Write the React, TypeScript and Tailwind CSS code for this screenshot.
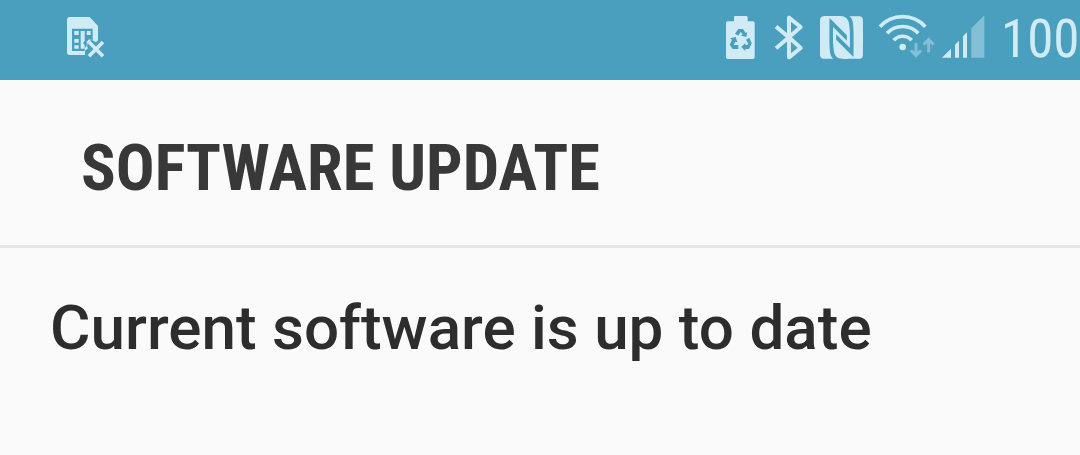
import { SiNfc } from "react-icons/si";

function SimMissingIcon() {
  return (
    <svg className="h-12 w-10 shrink-0" viewBox="48 42 120 144" fill="none">
      <path
        fill="#cfebf4"
        fillRule="evenodd"
        d="M59 51H119L144 78V121L138 127L124 119L109 134L114 145L105 152V165H59Q51 165 51 157V59Q51 51 59 51ZM66 86V153H104V145L113 134L109 126L117 118L128 121V86Z"
      />
      <path
        fill="#cfebf4"
        d="M73 93H86V105H73zM73 117H86V128H73zM73 136H86V146H73zM92 93H104V123L99 129L104 135V146H92zM110 93H122V105H110z"
      />
      <path d="M117 126L159 169M159 126L117 169" stroke="#cfebf4" strokeWidth="11" />
    </svg>
  );
}

function BatteryIcon() {
  return (
    <svg className="h-12 w-[33px] shrink-0" viewBox="27 42 99 144" fill="none">
      <path
        fill="#cfebf4"
        d="M61 48H94Q98 48 98 52V64H114Q119 64 119 69V172Q119 177 114 177H38Q33 177 33 172V69Q33 64 38 64H57V52Q57 48 61 48Z"
      />
      <g fill="#4a9ebe">
        <path d="M70 87H84L92 99L97 96L94 111L78 107L83 103L77 96L70 107L60 101Z" />
        <path d="M45 115L62 111L67 127L61 125L56 135H70V147H53L44 134L51 119Z" />
        <path d="M93 119L103 113L110 130L102 147H91V153L79 141L91 129V135H97L100 131Z" />
      </g>
    </svg>
  );
}

function BluetoothIcon() {
  return (
    <svg className="h-12 w-[33px] shrink-0" viewBox="174 42 99 144" fill="none">
      <path
        d="M183 80L222 112L257 81L222 53V172L257 144L222 112L183 145"
        stroke="#cfebf4"
        strokeWidth="12"
        strokeLinejoin="round"
      />
    </svg>
  );
}

function WifiIcon() {
  return (
    <svg className="h-12 w-[58px] shrink-0" viewBox="204 42 174 144" fill="none">
      <g stroke="#cfebf4" strokeWidth="11">
        <path d="M210 80A92 92 0 0 1 346 80" />
        <path d="M231 100A64 64 0 0 1 325 100" />
        <path d="M251 121A36 36 0 0 1 305 121" />
      </g>
      <circle cx="278" cy="141" r="10" fill="#cfebf4" />
      <g stroke="#84c0d5" strokeWidth="9">
        <path d="M318 129V168M303 151L318 167L333 151" />
        <path d="M356 157V118M341 134L356 119L371 134" />
      </g>
    </svg>
  );
}

function SignalIcon() {
  return (
    <svg className="h-12 w-[45px] shrink-0" viewBox="33 42 135 144" fill="#cfebf4">
      <path d="M36 173L63 146V173zM75 134L87 122V173H75zM99 109L111 97V173H99z" />
      <path d="M124 85L163 46V173H124z" fill="#84c0d5" />
    </svg>
  );
}

export default function App() {
  return (
    <div className="h-[455px] w-[1080px] overflow-hidden bg-[#fafafa] font-['Roboto',sans-serif]">
      <div className="flex h-20 items-start bg-[#4a9ebe] pt-3.5 pl-[66px]">
        <SimMissingIcon />
        <div className="ml-[618px] flex shrink-0 items-start">
          <BatteryIcon />
          <span className="w-4" />
          <BluetoothIcon />
          <SiNfc className="mt-0.5 mr-[15px] ml-3.5 size-[43px] shrink-0 text-[#cfebf4]" />
          <WifiIcon />
          <span className="w-[5px]" />
          <SignalIcon />
          <span className="ml-[15px] pt-px font-['Roboto_Condensed','Roboto',sans-serif] text-[53px] leading-12 text-[#cfebf4] [font-stretch:75%]">
            100
          </span>
        </div>
      </div>
      <header className="flex h-[168px] items-center border-b-3 border-[#e6e6e6] pt-3 pl-[81px]">
        <h1 className="font-['Roboto_Condensed','Roboto',sans-serif] text-[64.5px] leading-none font-bold whitespace-nowrap text-[#383838] [font-stretch:75%]">
          SOFTWARE UPDATE
        </h1>
      </header>
      <p className="pt-[49px] pl-[50px] text-[62px] leading-none font-medium whitespace-nowrap text-[#2d2d2d]">
        Current software is up to date
      </p>
    </div>
  );
}
